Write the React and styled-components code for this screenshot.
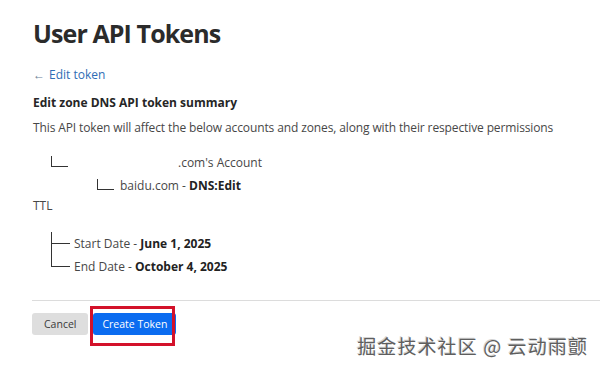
import React from 'react';
import styled, { createGlobalStyle } from 'styled-components';

const GlobalStyle = createGlobalStyle`
  html, body {
    margin: 0;
    padding: 0;
    background: #ffffff;
  }
  body {
    font-family: 'Open Sans', 'Noto Sans', sans-serif;
    color: #3a3a3a;
  }
`;

const Page = styled.div`
  position: relative;
  width: 600px;
  height: 371px;
  overflow: hidden;
  background: #fff;
`;

const Content = styled.div`
  padding: 16px 0 0 33px;
`;

const Title = styled.h1`
  margin: 0;
  font-size: 25px;
  line-height: 34px;
  font-weight: 700;
  color: #2b2b2b;
  letter-spacing: -0.9px;
`;

const BackLink = styled.a`
  display: inline-flex;
  align-items: center;
  gap: 4px;
  margin-top: 17px;
  font-size: 12px;
  line-height: 16px;
  color: #2f6db5;
  text-decoration: none;
`;

const Arrow = styled.span`
  font-size: 12px;
  color: #6b7f95;
`;

const Heading = styled.h2`
  margin: 11px 0 0;
  font-size: 12px;
  line-height: 16px;
  font-weight: 700;
  color: #262626;
`;

const Desc = styled.p`
  margin: 9px 0 0;
  font-size: 12px;
  line-height: 16px;
  color: #474747;
  letter-spacing: -0.12px;
`;

const Tree = styled.div`
  margin-top: 12px;
`;

const TreeRow = styled.div`
  display: flex;
  align-items: flex-end;
  height: 23px;
  padding-left: ${(p) => p.$indent}px;
  font-size: 12px;
  line-height: 16px;
  color: #474747;
`;

const Elbow = styled.span`
  flex: none;
  width: 16px;
  height: 10px;
  margin-bottom: 4px;
  border-left: 1px solid #333;
  border-bottom: 1px solid #333;
`;

const Label = styled.span`
  margin-left: ${(p) => p.$gap || 6}px;
  white-space: nowrap;

  b {
    color: #222;
    font-weight: 700;
  }
`;

const Redacted = styled.span`
  display: inline-block;
  width: 106px;
`;

const Ttl = styled.div`
  margin-top: 4px;
  font-size: 12px;
  line-height: 16px;
  color: #474747;
`;

const DateTree = styled.div`
  margin: 18px 0 0 18px;
  border-left: 1px solid #333;
  height: 35px;
  display: flex;
  flex-direction: column;
  justify-content: space-between;
`;

const DateRow = styled.div`
  display: flex;
  align-items: center;
  height: 1px;
  margin-top: ${(p) => p.$offset || 0}px;
  font-size: 12px;
  color: #474747;
  white-space: nowrap;

  b {
    color: #222;
    font-weight: 700;
  }
`;

const Branch = styled.span`
  flex: none;
  width: 18px;
  height: 0;
  border-top: 1px solid #333;
  margin-right: 4px;
`;

const Divider = styled.hr`
  margin: 33px 0 0 32px;
  border: none;
  border-top: 1px solid #dcdcdc;
`;

const Actions = styled.div`
  display: flex;
  gap: 5px;
  margin: 12px 0 0 32px;
`;

const Button = styled.button`
  position: relative;
  height: 22px;
  padding: 0 ${(p) => (p.$primary ? 9 : 12)}px;
  border: none;
  border-radius: 3px;
  font-family: 'Open Sans', 'Noto Sans', sans-serif;
  font-size: 10.5px;
  background: ${(p) => (p.$primary ? '#0b6cf0' : '#dedede')};
  color: ${(p) => (p.$primary ? '#ffffff' : '#3a3a3a')};
`;

const Highlight = styled.span`
  position: absolute;
  left: -3px;
  top: -7px;
  width: 85px;
  height: 40px;
  box-sizing: border-box;
  border: 3px solid #d3122a;
  pointer-events: none;
`;

const Watermark = styled.div`
  position: absolute;
  right: 12px;
  bottom: 12px;
  font-family: 'Noto Sans CJK SC', sans-serif;
  font-size: 19px;
  letter-spacing: 1.1px;
  color: #5e5e5e;
  text-shadow: 1px 1px 0 #ffffff, -1px -1px 0 #d4d4d4;
`;

export default function App() {
  return (
    <Page>
      <GlobalStyle />
      <Content>
        <Title>User API Tokens</Title>
        <BackLink href="#">
          <Arrow>←</Arrow> Edit token
        </BackLink>
        <Heading>Edit zone DNS API token summary</Heading>
        <Desc>
          This API token will affect the below accounts and zones, along with their
          respective permissions
        </Desc>
        <Tree>
          <TreeRow $indent={18}>
            <Elbow />
            <Label $gap={4}>
              <Redacted />
              .com's Account
            </Label>
          </TreeRow>
          <TreeRow $indent={64}>
            <Elbow />
            <Label>
              baidu.com - <b>DNS:Edit</b>
            </Label>
          </TreeRow>
        </Tree>
        <Ttl>TTL</Ttl>
        <DateTree>
          <DateRow $offset={11}>
            <Branch />
            Start Date - <b>&nbsp;June 1, 2025</b>
          </DateRow>
          <DateRow>
            <Branch />
            End Date - <b>&nbsp;October 4, 2025</b>
          </DateRow>
        </DateTree>
      </Content>
      <Divider />
      <Actions>
        <Button>Cancel</Button>
        <Button $primary>
          Create Token
          <Highlight />
        </Button>
      </Actions>
      <Watermark>掘金技术社区 @ 云动雨颤</Watermark>
    </Page>
  );
}
